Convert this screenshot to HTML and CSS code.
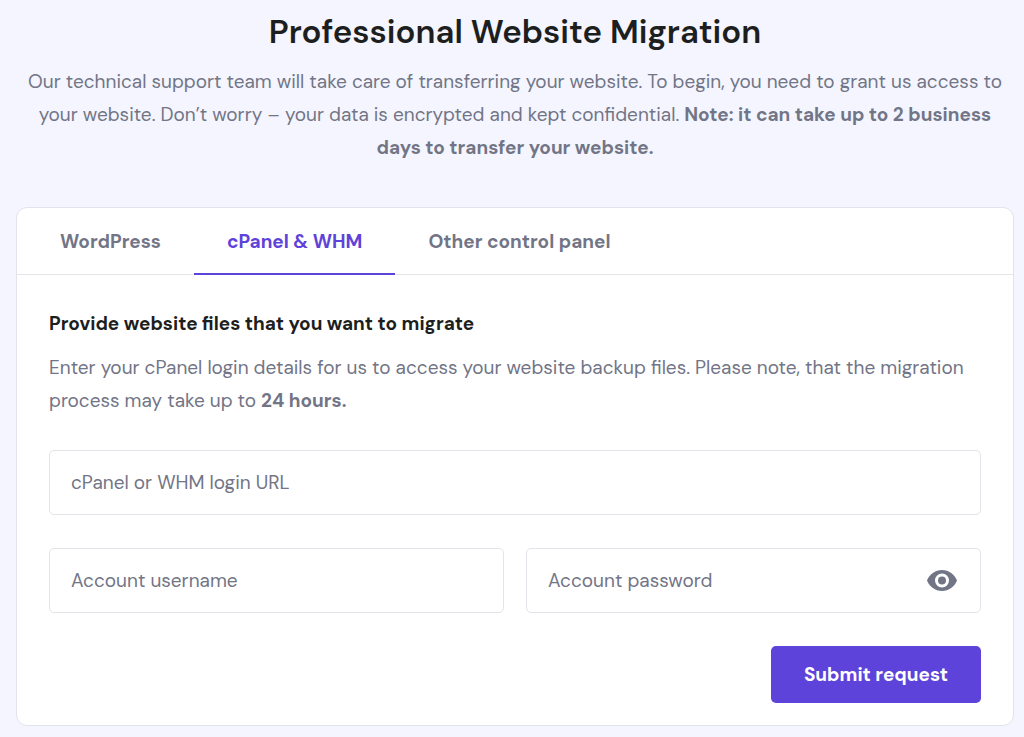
FILE: index.html
```
<!DOCTYPE html>
<html lang="en">

<head>
    <meta charset="UTF-8">
    <meta name="viewport" content="width=device-width, initial-scale=1.0">
    <title>Website Migration</title>
    <link rel="stylesheet" href="styles.css">
</head>

<body>
    <header class="intro">
        <h1>Professional Website Migration</h1>
        <p>Our technical support team will take care of transferring your website. To begin, you need to grant us access to
            your website. Don’t worry – your data is encrypted and kept confidential. <b>Note: it can take up to 2 business
            days to transfer your website.</b></p>
    </header>
    <main class="card">
        <div class="tabs" role="tablist">
            <button type="button" class="tab" role="tab" aria-selected="false">WordPress</button>
            <button type="button" class="tab active" role="tab" aria-selected="true">cPanel &amp; WHM</button>
            <button type="button" class="tab" role="tab" aria-selected="false">Other control panel</button>
        </div>
        <form class="content">
            <h2>Provide website files that you want to migrate</h2>
            <p>Enter your cPanel login details for us to access your website backup files. Please note, that the migration
                process may take up to <b>24 hours.</b></p>
            <div class="fields">
                <div class="field wide">
                    <input type="text" id="url" aria-label="cPanel or WHM login URL" placeholder="cPanel or WHM login URL">
                </div>
                <div class="field">
                    <input type="text" id="username" aria-label="Account username" placeholder="Account username">
                </div>
                <div class="field">
                    <input type="password" id="password" aria-label="Account password" placeholder="Account password">
                    <button type="button" class="eye" aria-label="Show password">
                        <svg viewBox="0 0 30 21" width="30" height="21">
                            <path fill-rule="evenodd" d="M15 0C8.200 0 2.400 4.300 0 10.500c2.400 6.200 8.200 10.500 15 10.500s12.600-4.300 15-10.500C27.600 4.300 21.800 0 15 0zM15 17.500a7 7 0 1 1 0-14 7 7 0 0 1 0 14zM15 6.500a4 4 0 1 0 0 8 4 4 0 0 0 0-8z"/>
                        </svg>
                    </button>
                </div>
            </div>
            <button type="submit" class="submit">Submit request</button>
        </form>
    </main>
    <script>
        let password = document.querySelector('#password');
        let eye = document.querySelector('.eye');
        let tabs = document.querySelectorAll('.tab');

        eye.addEventListener('click', () => {
            password.type = password.type === 'password' ? 'text' : 'password';
        });

        for (let i = 0; i < tabs.length; i++) {
            tabs[i].addEventListener('click', () => {
                tabs.forEach(tab => {
                    tab.classList.toggle('active', tab === tabs[i]);
                    tab.setAttribute('aria-selected', tab === tabs[i]);
                });
            });
        }
    </script>
</body>

</html>
```
FILE: styles.css
```
* {
    box-sizing: border-box;
}

body {
    margin: 0;
    padding: 8px 10px 12px 16px;
    background-color: #f4f5ff;
    color: #727586;
    font-family: "DM Sans", Inter, sans-serif;
    font-size: 19px;
    line-height: 33px;
}

h1,
h2,
p {
    margin: 0;
}

h1,
h2 {
    color: #1d1e20;
}

b {
    font-weight: 700;
}

button,
input {
    font: inherit;
}

button {
    border: none;
    cursor: pointer;
}

.intro {
    padding: 0 8px;
    text-align: center;
    margin-bottom: 43px;
}

h1 {
    font-size: 33px;
    line-height: 48px;
    font-weight: 600;
    margin-bottom: 9px;
}

.card {
    background-color: white;
    border: 1px solid #e3e4ea;
    border-radius: 11px;
}

.tabs {
    display: flex;
    padding-left: 10px;
    border-bottom: 1px solid #e6e6ea;
}

.tab {
    padding: 17px 33px 15px;
    margin-bottom: -1px;
    border-bottom: 2px solid transparent;
    background: none;
    color: #727586;
    font-weight: 700;
}

.tab.active {
    border-color: #5e43da;
    color: #5e43da;
}

.content {
    display: flex;
    flex-direction: column;
    padding: 32px 32px 22px;
}

h2 {
    font-size: 19px;
    font-weight: 700;
    margin-bottom: 11px;
}

.fields {
    display: grid;
    grid-template-columns: 1fr 1fr;
    gap: 33px 22px;
    margin: 33px 0;
}

.field {
    display: flex;
    align-items: center;
    border: 1px solid #e3e4ea;
    border-radius: 5px;
}

.wide {
    grid-column: span 2;
}

.field input {
    flex: 1;
    min-width: 0;
    height: 63px;
    padding: 0 21px;
    border: none;
    border-radius: 5px;
    outline: none;
    background: none;
    color: #1d1e20;
}

.field:focus-within {
    border-color: #5e43da;
}

.field input::placeholder {
    color: #727586;
    opacity: 1;
}

.eye {
    display: flex;
    margin-right: 23px;
    padding: 0;
    background: none;
    fill: #727586;
}

.submit {
    align-self: flex-end;
    padding: 12px 33px 12px;
    border-radius: 5px;
    background-color: #5e43da;
    color: white;
    font-weight: 700;
}
```
